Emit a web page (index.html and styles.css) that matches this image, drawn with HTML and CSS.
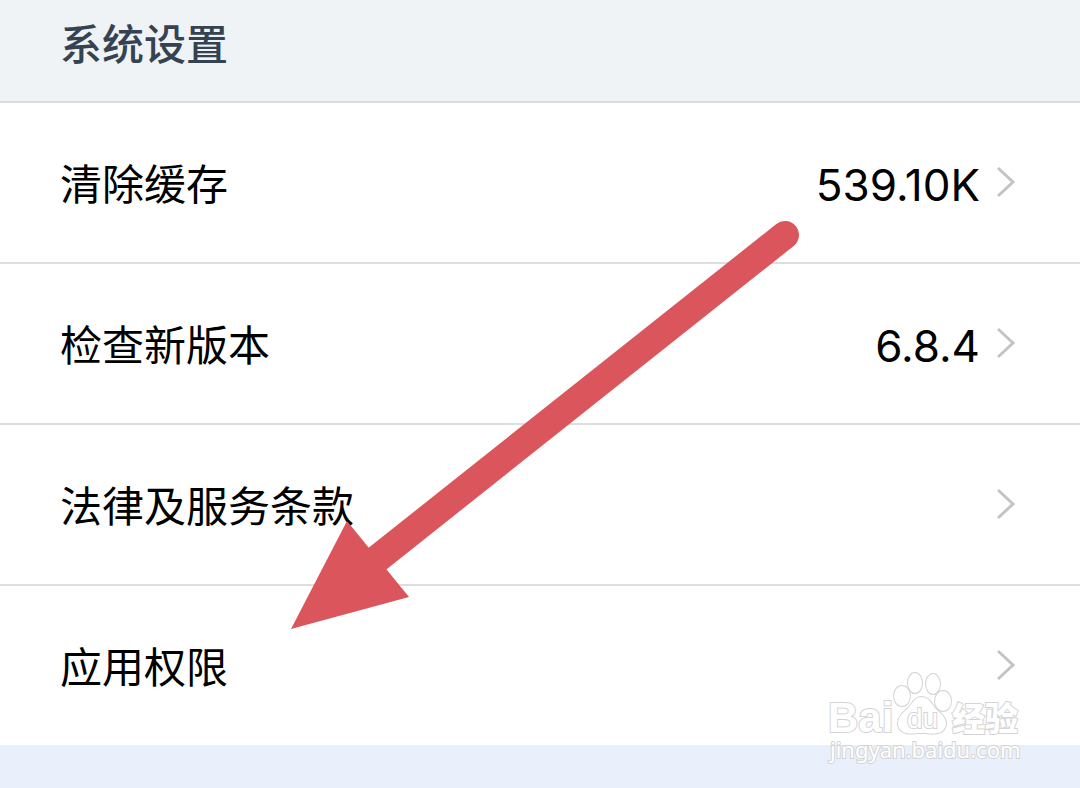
FILE: index.html
```html
<!DOCTYPE html>
<html lang="zh-CN">
<head>
    <meta charset="UTF-8">
    <meta name="viewport" content="width=device-width, initial-scale=1.0">
    <title>系统设置</title>
    <link rel="stylesheet" href="styles.css">
</head>
<body>
    <main class="page">
        <h1 class="header">系统设置</h1>

        <nav class="list">
            <a class="row" href="#cache">
                <span class="label">清除缓存</span>
                <span class="value">539.10K</span>
                <svg class="chevron" viewBox="0 0 20 32"><path d="M2 2 17 16 2 30"/></svg>
            </a>
            <a class="row" href="#version">
                <span class="label">检查新版本</span>
                <span class="value">6.8.4</span>
                <svg class="chevron" viewBox="0 0 20 32"><path d="M2 2 17 16 2 30"/></svg>
            </a>
            <a class="row" href="#terms">
                <span class="label">法律及服务条款</span>
                <svg class="chevron" viewBox="0 0 20 32"><path d="M2 2 17 16 2 30"/></svg>
            </a>
            <a class="row" href="#permissions">
                <span class="label">应用权限</span>
                <svg class="chevron" viewBox="0 0 20 32"><path d="M2 2 17 16 2 30"/></svg>
            </a>
        </nav>

        <svg class="arrow" viewBox="0 0 508 410" width="508" height="410">
            <path class="shaft" d="M494 15 86 339"/>
            <path class="head" d="M0 409 56 301 118 377Z"/>
        </svg>

        <svg class="watermark" viewBox="0 0 200 100" width="200" height="100">
            <text class="brand" x="4" y="59">Bai</text>
            <g class="paw">
                <ellipse cx="78" cy="23" rx="8" ry="10"/>
                <ellipse cx="91" cy="10" rx="7" ry="10"/>
                <ellipse cx="109" cy="11" rx="7" ry="10"/>
                <ellipse cx="119" cy="28" rx="8" ry="10"/>
                <path d="M98 24C90 24 88 32 82 37C76 42 72 48 75 55C80 63 89 60 98 60C107 60 116 63 121 55C124 48 120 43 114 38C108 33 106 24 98 24Z"/>
            </g>
            <text class="du" x="83" y="55">du</text>
            <text class="cjk" x="128" y="58">经验</text>
            <text class="site" x="6" y="85">jingyan.baidu.com</text>
        </svg>
    </main>
</body>
</html>
```
FILE: styles.css
```css
body {
    margin: 0;
    font-family: Inter, "Noto Sans CJK SC", sans-serif;
    font-size: 42px;
    line-height: 60px;
    background: #e9effb;
    color: #000;
}

.page {
    position: relative;
    min-height: 100vh;
}

.header {
    margin: 0;
    padding: 15px 60px 26px;
    border-bottom: 2px solid #d8dde0;
    background: #eff3f6;
    color: #354252;
    font-size: 42px;
    font-weight: 500;
}

.list {
    background: #fff;
}

.row {
    display: flex;
    align-items: center;
    padding: 52px 64px 47px 60px;
    border-bottom: 2px solid #dcdedf;
    color: inherit;
    text-decoration: none;
}

.row:last-child {
    border-bottom: 0;
}

.label {
    flex: 1;
}

.value {
    font-size: 44px;
}

.chevron {
    width: 20px;
    height: 32px;
    margin: 0 0 6px 16px;
    fill: none;
    stroke: #c4c4c4;
    stroke-width: 3;
}

/* 红色箭头 */
.arrow {
    position: absolute;
    top: 220px;
    left: 291px;
    pointer-events: none;
}

.shaft {
    fill: none;
    stroke: #db565c;
    stroke-width: 28;
    stroke-linecap: round;
}

.head {
    fill: #db565c;
}

/* 水印 */
.watermark {
    position: absolute;
    right: 56px;
    bottom: 15px;
    overflow: visible;
    fill: #fff;
    stroke: #d4d4d4;
    stroke-width: 2;
    paint-order: stroke;
    pointer-events: none;
}

.brand {
    font: bold 42px "Liberation Sans", sans-serif;
}

.du {
    font: 28px "Liberation Sans", sans-serif;
}

.cjk {
    font: 900 33px "Noto Sans CJK SC", sans-serif;
}

.site {
    font: 22px "Noto Sans", sans-serif;
}
```
